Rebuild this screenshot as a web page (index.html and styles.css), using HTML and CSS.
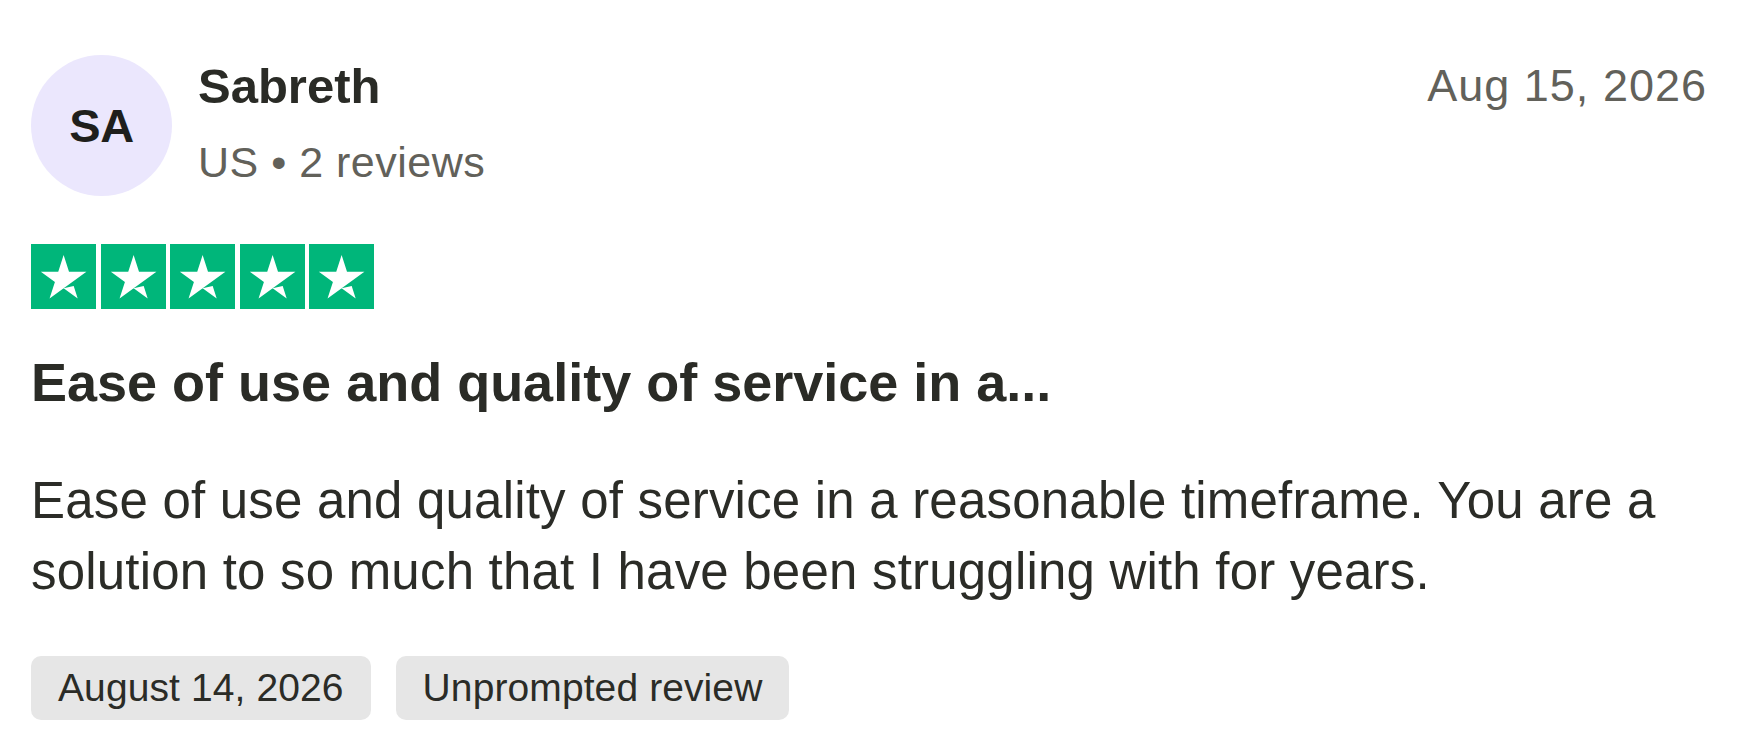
FILE: index.html
```html
<!DOCTYPE html>
<html lang="en">
<head>
<meta charset="utf-8">
<title>Review</title>
<link rel="stylesheet" href="styles.css">
</head>
<body>
<article class="review">
  <header class="review-header">
    <div class="user">
      <div class="avatar">SA</div>
      <div class="user-info">
        <div class="user-name">Sabreth</div>
        <div class="user-meta">US • 2 reviews</div>
      </div>
    </div>
    <time class="review-date">Aug 15, 2026</time>
  </header>
  <div class="stars" aria-label="Rated 5 out of 5">
    <svg class="star" viewBox="0 0 46.375586 46.330002"><path fill="#00b67a" d="M0 46.330002h46.375586V0H0z"/><path fill="#fff" d="M39.533936 19.711433L13.230239 38.80065l3.838216-11.797827L7.02115 19.711433h12.418975l3.837417-11.798624 3.837418 11.798624h12.418975zM23.2785 31.510075l7.183595-1.509576 2.862114 8.800152L23.2785 31.509276z"/></svg>
    <svg class="star" viewBox="0 0 46.375586 46.330002"><path fill="#00b67a" d="M0 46.330002h46.375586V0H0z"/><path fill="#fff" d="M39.533936 19.711433L13.230239 38.80065l3.838216-11.797827L7.02115 19.711433h12.418975l3.837417-11.798624 3.837418 11.798624h12.418975zM23.2785 31.510075l7.183595-1.509576 2.862114 8.800152L23.2785 31.509276z"/></svg>
    <svg class="star" viewBox="0 0 46.375586 46.330002"><path fill="#00b67a" d="M0 46.330002h46.375586V0H0z"/><path fill="#fff" d="M39.533936 19.711433L13.230239 38.80065l3.838216-11.797827L7.02115 19.711433h12.418975l3.837417-11.798624 3.837418 11.798624h12.418975zM23.2785 31.510075l7.183595-1.509576 2.862114 8.800152L23.2785 31.509276z"/></svg>
    <svg class="star" viewBox="0 0 46.375586 46.330002"><path fill="#00b67a" d="M0 46.330002h46.375586V0H0z"/><path fill="#fff" d="M39.533936 19.711433L13.230239 38.80065l3.838216-11.797827L7.02115 19.711433h12.418975l3.837417-11.798624 3.837418 11.798624h12.418975zM23.2785 31.510075l7.183595-1.509576 2.862114 8.800152L23.2785 31.509276z"/></svg>
    <svg class="star" viewBox="0 0 46.375586 46.330002"><path fill="#00b67a" d="M0 46.330002h46.375586V0H0z"/><path fill="#fff" d="M39.533936 19.711433L13.230239 38.80065l3.838216-11.797827L7.02115 19.711433h12.418975l3.837417-11.798624 3.837418 11.798624h12.418975zM23.2785 31.510075l7.183595-1.509576 2.862114 8.800152L23.2785 31.509276z"/></svg>
  </div>
  <h2 class="review-title">Ease of use and quality of service in a...</h2>
  <p class="review-body">Ease of use and quality of service in a reasonable timeframe. You are a solution to so much that I have been struggling with for years.</p>
  <div class="tags">
    <span class="tag">August 14, 2026</span>
    <span class="tag">Unprompted review</span>
  </div>
</article>
</body>
</html>
```

FILE: styles.css
```css
html, body {
  margin: 0;
  padding: 0;
  background: #ffffff;
}

body {
  font-family: "Liberation Sans", Arial, sans-serif;
  color: #2a2b26;
}

.review {
  padding: 55px 49px 0 31px;
}

.review-header {
  display: flex;
  justify-content: space-between;
  align-items: flex-start;
}

.user {
  display: flex;
  align-items: flex-start;
  gap: 26px;
}

.avatar {
  width: 141px;
  height: 141px;
  border-radius: 50%;
  background: #ebe7fd;
  color: #1f1f1c;
  display: flex;
  align-items: center;
  justify-content: center;
  font-size: 47px;
  font-weight: 700;
  letter-spacing: -0.5px;
}

.user-info {
  display: flex;
  flex-direction: column;
  padding-top: 3px;
}

.user-name {
  font-size: 49px;
  line-height: 56px;
  font-weight: 700;
  color: #2a2b26;
}

.user-meta {
  margin-top: 23px;
  font-size: 43px;
  line-height: 50px;
  color: #62615a;
  letter-spacing: 0.5px;
}

.review-date {
  margin-top: 5px;
  font-size: 45px;
  line-height: 52px;
  color: #62615a;
  letter-spacing: 1px;
}

.stars {
  display: flex;
  gap: 4.5px;
  margin-top: 48px;
}

.star {
  display: block;
  width: 65px;
  height: 65px;
}

.review-title {
  margin: 42px 0 0;
  font-size: 54px;
  line-height: 62px;
  font-weight: 700;
  color: #2a2b26;
}

.review-body {
  margin: 52px 0 0;
  font-size: 51px;
  line-height: 71px;
  color: #2b2c27;
  letter-spacing: 0.2px;
}

.tags {
  display: flex;
  gap: 25px;
  margin-top: 49px;
}

.tag {
  display: inline-block;
  height: 64px;
  line-height: 64px;
  padding: 0 27px;
  border-radius: 10px;
  background: #e6e6e6;
  font-size: 39px;
  color: #2b2c27;
  letter-spacing: 0.1px;
}
```
